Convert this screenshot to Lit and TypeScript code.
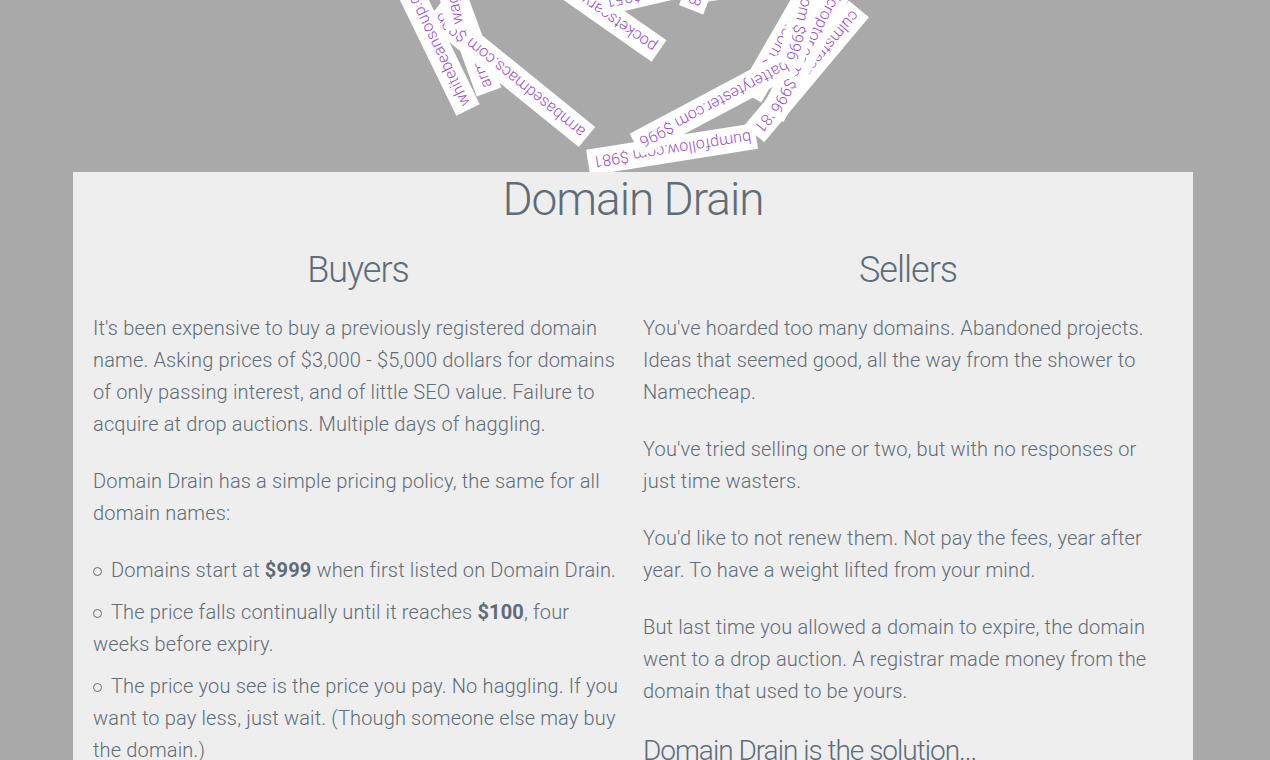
import { LitElement, html, css } from "lit";
import { customElement } from "lit/decorators.js";
import { styleMap } from "lit/directives/style-map.js";

interface Tag {
  text: string;
  x: number;
  y: number;
  angle: number;
  anchor: "start" | "end";
}

// Later tags lie over earlier ones; x and y are the middle of the anchored edge.
const TAGS: Tag[] = [
  { text: "armourmaker.com $996", x: 416, y: 92, angle: 250, anchor: "start" },
  { text: "armbasedmacs.com $996", x: 514, y: 137, angle: 219, anchor: "start" },
  { text: "wagonrides.com $951", x: 386, y: 29, angle: 259, anchor: "start" },
  { text: "whitebeansoup.com $996", x: 395, y: 110, angle: 244, anchor: "start" },
  { text: "pocketscarves.com $951", x: 586, y: 51, angle: 215, anchor: "start" },
  { text: "rentalboat.com $951", x: 528, y: 3, angle: 167, anchor: "end" },
  { text: "meadowhill.com", x: 632, y: -11, angle: 171, anchor: "end" },
  { text: "inkvault.com $998", x: 618, y: 10, angle: 111, anchor: "end" },
  { text: "bumpfollow.com $981", x: 683, y: 136, angle: 171, anchor: "start" },
  { text: "culmstream.com $81", x: 786, y: 9, angle: 130, anchor: "start" },
  { text: "microptor.com $996", x: 699, y: 116, angle: 118, anchor: "end" },
  { text: "acorncoin.com $996", x: 677, y: 96, angle: 120, anchor: "end" },
  { text: "batterytester.com $996", x: 563, y: 145, angle: 152, anchor: "end" },
  { text: "plumroom.com $996", x: 717, y: 65, angle: 104, anchor: "end" },
];

@customElement("domain-swirl")
export class DomainSwirl extends LitElement {
  static styles = css`
    :host {
      display: block;
      height: 172px;
      overflow: hidden;
    }
    .canvas {
      position: relative;
      max-width: 1120px;
      margin: 0 auto;
    }
    .tag {
      position: absolute;
      padding: 0 5px;
      background: #fff;
      color: #9b4dca;
      line-height: 26px;
      white-space: nowrap;
      text-decoration: none;
    }
    .start {
      transform-origin: 0 50%;
    }
    .end {
      transform-origin: 100% 50%;
    }
  `;

  render() {
    return html`<div class="canvas">
      ${TAGS.map(
        (t) => html`<a
          class="tag ${t.anchor}"
          href="#${t.text.split(" ")[0]}"
          style=${styleMap({
            left: `${t.x}px`,
            top: `${t.y}px`,
            transform: `translate(${t.anchor === "end" ? "-100%" : "0"}, -50%) rotate(${t.angle}deg)`,
          })}
          >${t.text}</a
        >`
      )}
    </div>`;
  }
}

@customElement("app-root")
export class AppRoot extends LitElement {
  static styles = css`
    :host {
      display: block;
      box-sizing: border-box;
      height: 100vh;
      overflow: hidden;
      padding-right: 4px;
      background: #a9a9a9;
      color: #606c76;
      font-family: Roboto, "Liberation Sans", sans-serif;
      font-size: 16px;
      font-weight: 300;
      letter-spacing: 0.01em;
    }
    .panel {
      box-sizing: border-box;
      position: relative;
      max-width: 1120px;
      margin: 0 auto;
      padding: 0 20px;
      background: #eee;
      font-size: 20px;
      line-height: 32px;
    }
    h1,
    h2,
    h3 {
      margin: 0;
      font-weight: 300;
      letter-spacing: -1px;
    }
    h1 {
      margin-bottom: 20px;
      font-size: 46px;
      line-height: 55px;
      text-align: center;
    }
    h2 {
      margin-bottom: 18px;
      font-size: 36px;
      line-height: 47px;
      text-align: center;
    }
    h3 {
      margin-bottom: 18px;
      font-size: 28px;
      line-height: 38px;
    }
    .columns {
      display: grid;
      grid-template-columns: 1fr 1fr;
      gap: 20px;
    }
    p {
      margin: 0 0 25px;
    }
    ul {
      margin: 0 0 25px;
      padding: 0;
      list-style: none;
    }
    li {
      margin-bottom: 10px;
    }
    li::before {
      content: "";
      display: inline-block;
      box-sizing: border-box;
      width: 9px;
      height: 9px;
      margin: 0 9px 1px 0;
      border: 1px solid currentColor;
      border-radius: 50%;
    }
    strong {
      font-weight: 700;
    }
  `;

  render() {
    return html`
      <domain-swirl></domain-swirl>
      <main class="panel">
        <h1>Domain Drain</h1>
        <div class="columns">
          <section>
            <h2>Buyers</h2>
            <p>
              It's been expensive to buy a previously registered domain name. Asking prices of $3,000 - $5,000 dollars
              for domains of only passing interest, and of little SEO value. Failure to acquire at drop auctions.
              Multiple days of haggling.
            </p>
            <p>Domain Drain has a simple pricing policy, the same for all domain names:</p>
            <ul>
              <li>Domains start at <strong>$999</strong> when first listed on Domain Drain.</li>
              <li>The price falls continually until it reaches <strong>$100</strong>, four weeks before expiry.</li>
              <li>The price you see is the price you pay. No haggling. If you want to pay less, just wait. (Though
                someone else may buy the domain.)</li>
            </ul>
          </section>
          <section>
            <h2>Sellers</h2>
            <p>
              You've hoarded too many domains. Abandoned projects. Ideas that seemed good, all the way from the shower
              to Namecheap.
            </p>
            <p>You've tried selling one or two, but with no responses or just time wasters.</p>
            <p>
              You'd like to not renew them. Not pay the fees, year after year. To have a weight lifted from your mind.
            </p>
            <p>
              But last time you allowed a domain to expire, the domain went to a drop auction. A registrar made money
              from the domain that used to be yours.
            </p>
            <h3>Domain Drain is the solution...</h3>
          </section>
        </div>
      </main>
    `;
  }
}
